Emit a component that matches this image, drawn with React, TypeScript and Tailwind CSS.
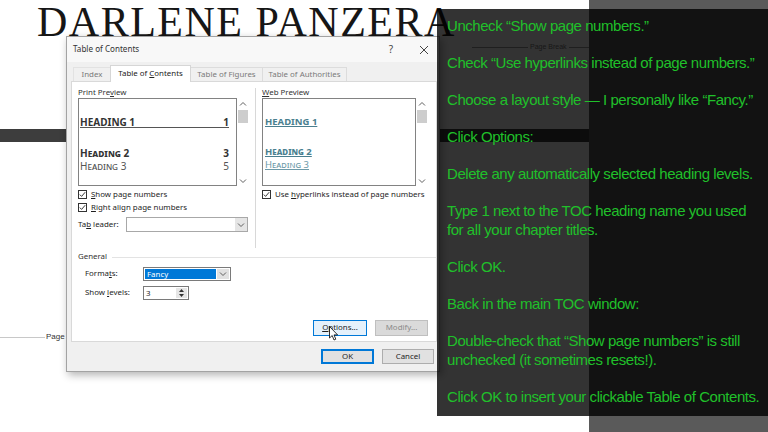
import React from "react";

function Chev({ dir = "down", color = "#606060" }: { dir?: "up" | "down"; color?: string }) {
  return (
    <svg width="8" height="6" viewBox="0 0 8 6">
      <path
        d={dir === "up" ? "M1 4.5 L4 1.5 L7 4.5" : "M1 1.5 L4 4.5 L7 1.5"}
        fill="none"
        stroke={color}
        strokeWidth="1"
      />
    </svg>
  );
}

function CheckBox() {
  return (
    <div className="w-[9px] h-[9px] border border-[#333] bg-white flex items-center justify-center shrink-0">
      <svg width="7" height="7" viewBox="0 0 7 7">
        <path d="M0.8 3.6 L2.6 5.4 L6.2 1.2" fill="none" stroke="#222" strokeWidth="0.9" />
      </svg>
    </div>
  );
}

function ScrollBar() {
  return (
    <div className="w-[11px] h-full flex flex-col items-center">
      <div className="h-[11px] flex items-center justify-center pt-[1px]">
        <Chev dir="up" />
      </div>
      <div className="w-[10px] h-[13px] bg-[#cdcdcd] mt-[1px]" />
      <div className="flex-1" />
      <div className="h-[11px] flex items-center justify-center">
        <Chev dir="down" />
      </div>
    </div>
  );
}

function Dialog() {
  return (
    <div className="absolute left-[66px] top-[36px] w-[374px] h-[336px] bg-[#f0f0f0] border border-[#a3a3a3] shadow-[2px_3px_8px_rgba(0,0,0,0.3)] flex flex-col text-[7.9px] text-[#1e1e1e] [font-family:'Noto_Sans','Open_Sans',sans-serif]">
      {/* title bar */}
      <div className="h-[25px] bg-[#f8f8f8] flex items-center pl-[6px] pr-[9px]">
        <span className="text-[8.1px] text-[#333]">Table of Contents</span>
        <div className="flex-1" />
        <span className="w-[10px] text-center text-[10px] text-[#444]">?</span>
        <span className="w-[22px]" />
        <svg width="12" height="12" viewBox="0 0 12 12">
          <path d="M2 2 L10 10 M10 2 L2 10" stroke="#444" strokeWidth="1" />
        </svg>
      </div>
      {/* tabs */}
      <div className="h-[19px] flex items-end pl-[6px] relative z-10">
        <div className="w-[37px] h-[14px] border-t border-l border-[#e2e2e2] flex items-center justify-center text-[#7a7a7a]">
          <span>Index</span>
        </div>
        <div className="w-[81px] h-[17px] -mb-px bg-white border-t border-l border-r border-[#d6d6d6] flex items-center justify-center text-[#222] whitespace-nowrap">
          <span>
            Table of <span className="underline">C</span>ontents
          </span>
        </div>
        <div className="w-[72px] h-[14px] border-t border-r border-[#dcdcdc] flex items-center justify-center text-[#7a7a7a] whitespace-nowrap">
          <span>Table of Figures</span>
        </div>
        <div className="w-[84px] h-[14px] border-t border-r border-[#dcdcdc] flex items-center justify-center text-[#7a7a7a] whitespace-nowrap">
          <span>Table of Authorities</span>
        </div>
      </div>
      {/* panel */}
      <div className="ml-[4px] mr-[2px] h-[261px] bg-white border border-[#d9d9d9] flex flex-col pl-[6px] pt-[5px]">
        <div className="flex">
          {/* left column */}
          <div className="w-[171px] flex flex-col">
            <div className="h-[11px] leading-[11px] text-[#333]">
              <span>
                Print Pre<span className="underline">v</span>iew
              </span>
            </div>
            <div className="h-[88px] flex">
              <div className="w-[159px] h-full border border-[#828282] bg-white flex flex-col pl-[1px] pr-[7px] pt-[18px]">
                <div className="h-[11px] leading-[11px] flex justify-between border-b-[1.5px] border-[#555] text-[10px] font-bold text-[#333]">
                  <span>HEADING 1</span>
                  <span>1</span>
                </div>
                <div className="mt-[19px] h-[13px] leading-[13px] flex justify-between text-[10px] font-bold text-[#333] [font-variant:small-caps]">
                  <span>Heading 2</span>
                  <span>3</span>
                </div>
                <div className="h-[13px] leading-[13px] flex justify-between text-[10px] text-[#555] [font-variant:small-caps]">
                  <span>Heading 3</span>
                  <span>5</span>
                </div>
              </div>
              <ScrollBar />
            </div>
            <div className="mt-[2px] h-[13px] flex items-center gap-[4px]">
              <CheckBox />
              <span>
                <span className="underline">S</span>how page numbers
              </span>
            </div>
            <div className="h-[13px] flex items-center gap-[4px]">
              <CheckBox />
              <span>
                <span className="underline">R</span>ight align page numbers
              </span>
            </div>
            <div className="mt-[3px] h-[15px] flex items-center">
              <span className="w-[48px]">
                Ta<span className="underline">b</span> leader:
              </span>
              <div className="w-[122px] h-[15px] border border-[#a8a8a8] bg-white flex justify-end">
                <div className="w-[12px] h-full bg-[#e5e5e5] flex items-center justify-center">
                  <Chev />
                </div>
              </div>
            </div>
          </div>
          {/* separator */}
          <div className="ml-[6px] mr-[6px] mt-[1px] w-px h-[160px] bg-[#d8d8d8]" />
          {/* right column */}
          <div className="w-[165px] flex flex-col">
            <div className="h-[11px] leading-[11px] text-[#333]">
              <span>
                <span className="underline">W</span>eb Preview
              </span>
            </div>
            <div className="h-[88px] flex">
              <div className="w-[154px] h-full border border-[#828282] bg-white flex flex-col pl-[2px] pt-[16px]">
                <div className="h-[13px] leading-[13px] text-[9.5px] font-bold text-[#4a7f8f] underline">
                  HEADING 1
                </div>
                <div className="mt-[17px] h-[13px] leading-[13px] text-[9.5px] font-bold text-[#4a7f8f] underline [font-variant:small-caps]">
                  Heading 2
                </div>
                <div className="h-[13px] leading-[13px] text-[9.5px] text-[#6d9aa8] underline [font-variant:small-caps]">
                  Heading 3
                </div>
              </div>
              <ScrollBar />
            </div>
            <div className="mt-[2px] h-[13px] flex items-center gap-[4px] whitespace-nowrap">
              <CheckBox />
              <span>
                Use <span className="underline">h</span>yperlinks instead of page numbers
              </span>
            </div>
          </div>
        </div>
        {/* General */}
        <div className="mt-[3px] h-[12px] flex items-center text-[#333]">
          <span>General</span>
          <div className="ml-[5px] flex-1 h-px bg-[#e3e3e3]" />
        </div>
        <div className="mt-[4px] h-[14px] flex items-center pl-[7px]">
          <span className="w-[58px]">
            Forma<span className="underline">t</span>s:
          </span>
          <div className="w-[88px] h-[14px] border border-[#7a7a7a] bg-white flex p-[1px]">
            <div className="flex-1 bg-[#0078d7] text-white leading-[10px] pl-[2px]">Fancy</div>
            <div className="w-[12px] ml-[1px] bg-[#e1e1e1] flex items-center justify-center">
              <Chev />
            </div>
          </div>
        </div>
        <div className="mt-[5px] h-[14px] flex items-center pl-[7px]">
          <span className="w-[58px]">
            Show <span className="underline">l</span>evels:
          </span>
          <div className="w-[46px] h-[14px] border border-[#7a7a7a] bg-white flex">
            <span className="flex-1 pl-[2px] leading-[12px]">3</span>
            <div className="w-[11px] my-[1px] mr-[1px] bg-[#e6e6e6] flex flex-col items-center justify-around">
              <svg width="5" height="3" viewBox="0 0 5 3">
                <path d="M0 3 L2.5 0 L5 3 Z" fill="#333" />
              </svg>
              <svg width="5" height="3" viewBox="0 0 5 3">
                <path d="M0 0 L2.5 3 L5 0 Z" fill="#333" />
              </svg>
            </div>
          </div>
        </div>
        <div className="mt-[20px] h-[16px] flex justify-end gap-[8px] pr-[8px]">
          <div className="w-[54px] h-[16px] bg-[#e5f1fb] border border-[#0078d7] flex items-center justify-center">
            <span>
              <span className="underline">O</span>ptions...
            </span>
          </div>
          <div className="w-[53px] h-[16px] bg-[#dadada] border border-[#bfbfbf] flex items-center justify-center text-[#8a8a8a]">
            <span>Modify...</span>
          </div>
        </div>
      </div>
      {/* bottom */}
      <div className="pt-[7px] h-[28px] flex justify-end gap-[8px] pr-[5px]">
        <div className="w-[53px] h-[15px] bg-[#e1e1e1] border border-[#0078d7] shadow-[inset_0_0_0_1px_#0078d7] flex items-center justify-center">
          <span>OK</span>
        </div>
        <div className="w-[52px] h-[15px] bg-[#e1e1e1] border border-[#adadad] flex items-center justify-center">
          <span>Cancel</span>
        </div>
      </div>
    </div>
  );
}

function Overlay() {
  return (
    <div className="absolute left-[437px] top-[9px] w-[331px] h-[407px] bg-black/80 pl-[10px] pt-[8px] text-[#20c02a] text-[15px] tracking-[-0.45px] leading-[18.55px] [font-family:'Liberation_Sans',Arial,sans-serif] flex flex-col gap-[18.55px] whitespace-nowrap">
      <p>Uncheck “Show page numbers.”</p>
      <p>Check “Use hyperlinks instead of page numbers.”</p>
      <p>Choose a layout style — I personally like “Fancy.”</p>
      <p>Click Options:</p>
      <p>Delete any automatically selected heading levels.</p>
      <p>
        Type 1 next to the TOC heading name you used
        <br />
        for all your chapter titles.
      </p>
      <p>Click OK.</p>
      <p>Back in the main TOC window:</p>
      <p>
        Double-check that “Show page numbers” is still
        <br />
        unchecked (it sometimes resets!).
      </p>
      <p>Click OK to insert your clickable Table of Contents.</p>
    </div>
  );
}

export default function App() {
  return (
    <div className="relative w-[768px] h-[432px] overflow-hidden bg-white flex">
      <div className="w-[589px] shrink-0 flex flex-col">
        <div className="h-[43px] pl-[37px] pt-[1px] text-[42px] leading-none tracking-[1.5px] text-[#161616] [font-family:'Liberation_Serif',serif] whitespace-nowrap">
          DARLENE PANZERA
        </div>
        <div className="ml-[472px] h-[8px] flex items-center gap-[2px] text-[7px] text-[#777] [font-family:'Liberation_Sans',sans-serif]">
          <div className="w-[56px] h-px bg-[#999]" />
          <span>Page Break</span>
          <div className="flex-1 h-px bg-[#999]" />
        </div>
        <div className="mt-[78px] h-[13px] bg-[#3d3d3d]" />
        <div className="mt-[190px] h-[10px] flex items-center text-[8px] text-[#333] [font-family:'Liberation_Sans',sans-serif]">
          <div className="w-[45px] h-px bg-[#c8c8c8]" />
          <span className="ml-[1px]">Page Break</span>
        </div>
      </div>
      <div className="flex-1 bg-[#5a5a5a]" />
      <Dialog />
      <svg className="absolute left-[329px] top-[326px]" width="10" height="16" viewBox="0 0 10 16">
        <path
          d="M0.5 0.5 L0.5 12 L3.2 9.6 L5 14 L6.8 13.2 L5 8.9 L8.6 8.9 Z"
          fill="white"
          stroke="black"
          strokeWidth="0.8"
        />
      </svg>
      <Overlay />
    </div>
  );
}
